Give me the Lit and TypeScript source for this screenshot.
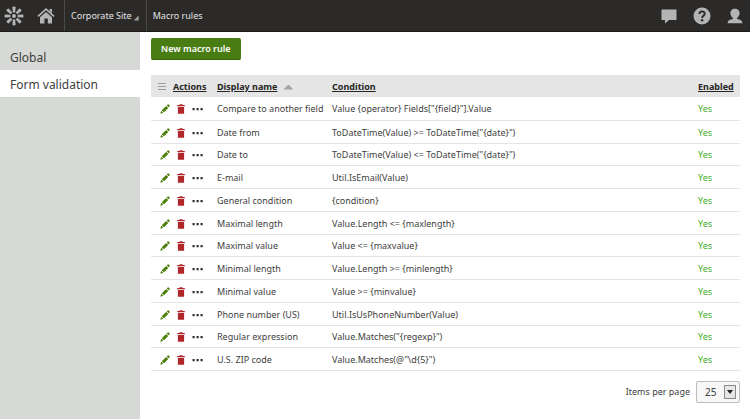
import { LitElement, html, css, svg } from "lit";
import { customElement, state } from "lit/decorators.js";

interface Rule {
  name: string;
  condition: string;
}

const RULES: Rule[] = [
  { name: "Compare to another field", condition: 'Value {operator} Fields["{field}"].Value' },
  { name: "Date from", condition: 'ToDateTime(Value) >= ToDateTime("{date}")' },
  { name: "Date to", condition: 'ToDateTime(Value) <= ToDateTime("{date}")' },
  { name: "E-mail", condition: "Util.IsEmail(Value)" },
  { name: "General condition", condition: "{condition}" },
  { name: "Maximal length", condition: "Value.Length <= {maxlength}" },
  { name: "Maximal value", condition: "Value <= {maxvalue}" },
  { name: "Minimal length", condition: "Value.Length >= {minlength}" },
  { name: "Minimal value", condition: "Value >= {minvalue}" },
  { name: "Phone number (US)", condition: "Util.IsUsPhoneNumber(Value)" },
  { name: "Regular expression", condition: 'Value.Matches("{regexp}")' },
  { name: "U.S. ZIP code", condition: 'Value.Matches(@"\\d{5}")' },
];

const SPOKES = [0, 45, 90, 135, 180, 225, 270, 315];

const logo = html`<svg width="20" height="20" viewBox="0 0 20 20" aria-hidden="true">
  ${SPOKES.map(
    (a) => svg`<path transform="rotate(${a} 10 10)" d="M8.4 1.2 Q8.4 .5 10 .5 Q11.6 .5 11.6 1.2 L11.2 6.4 H8.8Z" fill="#b4b4b4"/>`
  )}
  <circle cx="10" cy="10" r="2" fill="#b4b4b4" />
</svg>`;

const home = html`<svg width="18" height="16" viewBox="0 0 18 16" aria-hidden="true">
  <path d="M1 8.4 L9 1.2 L17 8.4" fill="none" stroke="#b4b4b4" stroke-width="1.6" />
  <path d="M12.6 1 H15 V5 L12.6 2.9Z M3 9.2 L9 4 L15 9.2 V15.5 H10.8 V10.5 H7.4 V15.5 H3Z" fill="#b4b4b4" />
</svg>`;

const bubble = html`<svg width="16" height="16" viewBox="0 0 16 16" aria-hidden="true">
  <path d="M.5 1.5 H15.5 V12 H8 L4 15.5 V12 H.5Z" fill="#b4b4b4" />
</svg>`;

const help = html`<svg width="18" height="18" viewBox="0 0 18 18" aria-hidden="true">
  <circle cx="9" cy="9" r="8.5" fill="#b4b4b4" />
  <path d="M6.4 7 C6.4 3.6 11.7 3.6 11.7 6.8 C11.7 8.9 9.1 8.8 9.1 11" fill="none" stroke="#2b2a29" stroke-width="1.9" />
  <circle cx="9.1" cy="13.3" r="1.2" fill="#2b2a29" />
</svg>`;

const person = html`<svg width="16" height="16" viewBox="0 0 16 16" aria-hidden="true">
  <path d="M8 .8 C10.9 .8 12.8 2.9 12.6 5.6 C12.4 8 11.2 9.3 10 10.2 V11 C13.4 11.4 15.3 12.6 15.5 15.2 H.5 C.7 12.6 2.6 11.4 6 11 V10.2 C4.8 9.3 3.6 8 3.4 5.6 C3.2 2.9 5.1 .8 8 .8Z" fill="#b4b4b4" />
</svg>`;

const pencil = html`<svg width="10" height="10" viewBox="0 0 10 10" aria-hidden="true">
  <path d="M.3 9.7 L1.2 6.8 L3.3 8.8Z M1.8 6.2 L6.2 1.9 L8.2 3.9 L3.9 8.2Z M6.8 1.4 L7.7 .5 Q8.3 .1 8.9 .7 L9.5 1.3 Q9.9 1.8 9.5 2.4 L8.7 3.3Z" fill="#497d04" />
</svg>`;

const bin = html`<svg width="8" height="10" viewBox="0 0 8 10" aria-hidden="true">
  <path d="M.2 1 H2.5 V.2 H5.5 V1 H7.8 V2.3 H.2Z M.9 3 H7.1 V9.8 H.9Z" fill="#b12628" />
</svg>`;

const dots = html`<svg width="11" height="10" viewBox="0 0 11 10" aria-hidden="true">
  <path d="M.5 4 H2.7 V6.2 H.5Z M4.5 4 H6.7 V6.2 H4.5Z M8.5 4 H10.7 V6.2 H8.5Z" fill="#333" />
</svg>`;

const bars = html`<svg width="10" height="10" viewBox="0 0 10 10" aria-hidden="true">
  <path d="M1 1.5 H9 M1 4.5 H9 M1 7.5 H9" stroke="#9c9c9c" stroke-width="1" />
</svg>`;

@customElement("app-root")
export class AppRoot extends LitElement {
  @state() private section = "Form validation";

  static styles = css`
    :host {
      display: flex;
      flex-direction: column;
      min-height: 100vh;
      background: #fff;
      color: #403e3d;
      font: 9px/16px "Noto Sans", "Open Sans", sans-serif;
    }
    * {
      box-sizing: border-box;
    }
    button {
      padding: 0;
      border: 0;
      background: none;
      color: inherit;
      font: inherit;
      cursor: pointer;
    }
    a {
      color: inherit;
    }
    svg {
      display: block;
    }
    .top {
      display: flex;
      height: 32px;
      background: #2b2a29;
      border-bottom: 1px solid #1c1b1b;
      color: #e4e4e4;
    }
    .brand,
    .crumb,
    .tools {
      display: flex;
      align-items: center;
    }
    .brand {
      gap: 13px;
      padding: 0 9px 0 4px;
    }
    .crumb {
      padding: 1px 7px 0 6px;
      border-left: 1px solid #4a4a49;
      text-decoration: none;
    }
    .corner {
      width: 5px;
      height: 5px;
      margin: 4px 0 0 2px;
      background: #a3a3a3;
      clip-path: polygon(100% 0, 100% 100%, 0 100%);
    }
    .tools {
      gap: 16px;
      margin-left: auto;
      padding-right: 7px;
    }
    .body {
      display: flex;
      flex: 1;
    }
    .side {
      display: flex;
      flex-direction: column;
      flex: none;
      width: 140px;
      padding-top: 11px;
      background: #d6d9d6;
    }
    .item {
      height: 27px;
      padding-left: 10px;
      font-size: 12px;
      line-height: 29px;
      text-decoration: none;
    }
    .item.current {
      background: #fff;
    }
    .main {
      flex: 1;
      min-width: 0;
      padding: 6px 10px 12px 11px;
    }
    .new {
      height: 22px;
      padding: 0 10px;
      border-bottom: 1px solid #3c6603;
      border-radius: 2px;
      background: #497d14;
      color: #fff;
      font-weight: 600;
    }
    table {
      width: 100%;
      margin-top: 15px;
      border-collapse: collapse;
      table-layout: fixed;
    }
    th,
    td {
      padding: 2px 0 0;
      text-align: left;
      white-space: nowrap;
    }
    th {
      height: 22px;
      background: #e5e5e5;
      color: #262524;
      font-weight: 700;
    }
    tbody tr {
      height: 23px;
      border-bottom: 1px solid #e5e5e5;
    }
    tbody tr:nth-child(4n + 3) {
      height: 22px;
    }
    .actions {
      width: 66px;
    }
    .name {
      width: 115px;
    }
    .enabled {
      width: 42px;
    }
    .yes {
      color: #3fae2a;
    }
    .head,
    .icons,
    .sort {
      display: flex;
      align-items: center;
    }
    .head {
      gap: 6px;
      padding-left: 6px;
    }
    .icons {
      gap: 7px;
      padding-left: 9px;
    }
    .sort {
      gap: 6px;
    }
    .arrow {
      width: 10px;
      height: 5px;
      background: #a3a3a3;
      clip-path: polygon(50% 0, 100% 100%, 0 100%);
    }
    .pager {
      display: flex;
      justify-content: flex-end;
      align-items: center;
      gap: 6px;
      margin-top: 10px;
    }
    .pick {
      display: grid;
      align-items: center;
      width: 44px;
    }
    select {
      grid-area: 1 / 1;
      appearance: none;
      width: 100%;
      height: 22px;
      padding: 0 8px;
      border: 1px solid #bdbbbb;
      border-radius: 2px;
      background: #f7f7f7;
      color: inherit;
      font: inherit;
      font-size: 10px;
    }
    .drop {
      grid-area: 1 / 1;
      display: grid;
      place-items: center;
      justify-self: end;
      width: 12px;
      height: 14px;
      margin-right: 4px;
      border: 1px solid #8a8a8a;
      background: #e6e6e6;
      pointer-events: none;
    }
  `;

  private pick(e: Event, name: string) {
    e.preventDefault();
    this.section = name;
  }

  render() {
    return html`
      <header class="top">
        <div class="brand">
          <button aria-label="Applications">${logo}</button>
          <button aria-label="Home">${home}</button>
        </div>
        <button class="crumb">Corporate Site<span class="corner"></span></button>
        <a class="crumb" href="#rules">Macro rules</a>
        <div class="tools">
          <button aria-label="Messages">${bubble}</button>
          <button aria-label="Help">${help}</button>
          <button aria-label="User">${person}</button>
        </div>
      </header>
      <div class="body">
        <nav class="side">
          ${["Global", "Form validation"].map(
            (n) => html`<a
              class="item ${n === this.section ? "current" : ""}"
              href="#"
              @click=${(e: Event) => this.pick(e, n)}
              >${n}</a
            >`
          )}
        </nav>
        <main class="main">
          <button class="new">New macro rule</button>
          <table>
            <thead>
              <tr>
                <th class="actions">
                  <div class="head"><button aria-label="Table menu">${bars}</button><a href="#actions">Actions</a></div>
                </th>
                <th class="name">
                  <div class="sort"><a href="#name">Display name</a><span class="arrow"></span></div>
                </th>
                <th><a href="#condition">Condition</a></th>
                <th class="enabled"><a href="#enabled">Enabled</a></th>
              </tr>
            </thead>
            <tbody>
              ${RULES.map(
                (r) => html`<tr>
                  <td>
                    <div class="icons">
                      <button aria-label="Edit">${pencil}</button>
                      <button aria-label="Delete">${bin}</button>
                      <button aria-label="More">${dots}</button>
                    </div>
                  </td>
                  <td>${r.name}</td>
                  <td>${r.condition}</td>
                  <td class="yes">Yes</td>
                </tr>`
              )}
            </tbody>
          </table>
          <div class="pager">
            <label for="size">Items per page</label>
            <div class="pick">
              <select id="size">
                <option>25</option>
                <option>50</option>
                <option>100</option>
              </select>
              <span class="drop"
                ><svg width="6" height="4" viewBox="0 0 6 4" aria-hidden="true"><path d="M0 0 H6 L3 4Z" fill="#222" /></svg
              ></span>
            </div>
          </div>
        </main>
      </div>
    `;
  }
}
